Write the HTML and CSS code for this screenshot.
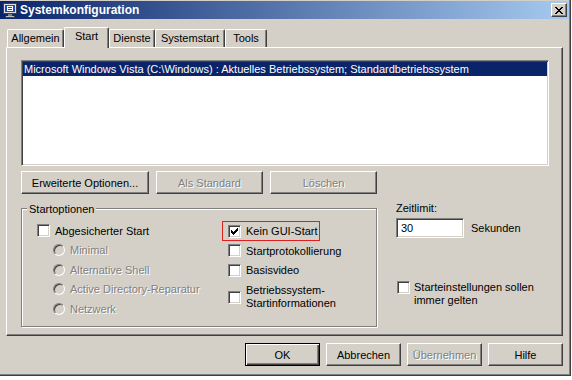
FILE: index.html
```html
<!DOCTYPE html>
<html lang="de">
<head>
<meta charset="utf-8">
<title>Systemkonfiguration</title>
<link rel="stylesheet" href="styles.css">
</head>
<body>
<div class="window">
  <div class="titlebar">
    <svg class="app-icon" viewBox="0 0 16 16" width="16" height="16" shape-rendering="crispEdges">
      <rect x="1" y="1" width="14" height="11" fill="#404040"/>
      <rect x="2" y="2" width="12" height="9" fill="#e0e0e0"/>
      <rect x="3" y="3" width="10" height="7" fill="#1c4fc4"/>
      <rect x="5" y="4" width="6" height="5" fill="#ffffff"/>
      <rect x="6" y="5" width="4" height="1" fill="#1c4fc4"/>
      <rect x="6" y="7" width="4" height="1" fill="#1c4fc4"/>
      <rect x="6" y="12" width="4" height="2" fill="#808080"/>
      <rect x="3" y="14" width="10" height="2" fill="#404040"/>
      <rect x="4" y="14" width="8" height="1" fill="#c0c0c0"/>
    </svg>
    <span class="title">Systemkonfiguration</span>
    <div class="close">
      <svg viewBox="0 0 8 7" width="8" height="7" shape-rendering="crispEdges"><path d="M0 0h2v1H0zM6 0h2v1H6zM1 1h2v1H1zM5 1h2v1H5zM2 2h4v1H2zM3 3h2v1H3zM2 4h4v1H2zM1 5h2v1H1zM5 5h2v1H5zM0 6h2v1H0zM6 6h2v1H6z" fill="#000"/></svg>
    </div>
  </div>
  <div class="body">
    <div class="tabs">
      <div class="tab w-allg">Allgemein</div>
      <div class="tab active w-start">Start</div>
      <div class="tab w-dienste">Dienste</div>
      <div class="tab w-sys">Systemstart</div>
      <div class="tab w-tools">Tools</div>
    </div>
    <div class="panel">
      <div class="listbox">
        <div class="item selected">Microsoft Windows Vista (C:\Windows) : Aktuelles Betriebssystem; Standardbetriebssystem</div>
      </div>
      <div class="btnrow">
        <div class="btn w-erw">Erweiterte Optionen...</div>
        <div class="btn disabled w-std">Als Standard</div>
        <div class="btn disabled w-std">Löschen</div>
      </div>
      <div class="lower">
        <div class="group">
          <div class="group-title">Startoptionen</div>
          <div class="group-cols">
            <div class="col-left">
              <div class="opt"><span class="cb"></span><span>Abgesicherter Start</span></div>
              <div class="opt sub disabled"><span class="rb"></span><span>Minimal</span></div>
              <div class="opt sub disabled"><span class="rb"></span><span>Alternative Shell</span></div>
              <div class="opt sub disabled"><span class="rb"></span><span>Active Directory-Reparatur</span></div>
              <div class="opt sub disabled"><span class="rb"></span><span>Netzwerk</span></div>
            </div>
            <div class="col-right">
              <div class="opt focus"><span class="cb"><svg viewBox="0 0 7 7" width="7" height="7" shape-rendering="crispEdges"><path d="M0 2h1v3H0zM1 3h1v3H1zM2 4h1v3H2zM3 3h1v3H3zM4 2h1v3H4zM5 1h1v3H5zM6 0h1v3H6z" fill="#000"/></svg></span><span>Kein GUI-Start</span></div>
              <div class="opt"><span class="cb"></span><span>Startprotokollierung</span></div>
              <div class="opt"><span class="cb"></span><span>Basisvideo</span></div>
              <div class="opt two"><span class="cb"></span><span class="ml">Betriebssystem-<br>Startinformationen</span></div>
            </div>
          </div>
        </div>
        <div class="side">
          <div class="lbl">Zeitlimit:</div>
          <div class="timerow">
            <div class="input">30</div>
            <span>Sekunden</span>
          </div>
          <div class="persist"><span class="cb"></span><span class="ml">Starteinstellungen sollen<br>immer gelten</span></div>
        </div>
      </div>
    </div>
    <div class="footer">
      <div class="btn default w-foot">OK</div>
      <div class="btn w-foot">Abbrechen</div>
      <div class="btn disabled w-foot">Übernehmen</div>
      <div class="btn w-foot">Hilfe</div>
    </div>
  </div>
</div>
</body>
</html>
```

FILE: styles.css
```css
body {
  margin: 0;
  background: #ffffff;
  font-family: "Liberation Sans", Arial, sans-serif;
  font-size: 11px;
  color: #000;
}

.window {
  width: 571px;
  height: 376px;
  box-sizing: border-box;
  background: #d4d0c8;
  padding-top: 1px;
  border-right: 1px solid #404040;
  border-bottom: 1px solid #404040;
  box-shadow: inset -1px -1px 0 #808080;
}

.titlebar {
  height: 18px;
  margin-right: 1px;
  background: linear-gradient(to right, #0a246a, #a6caf0);
  display: flex;
  align-items: center;
}

.app-icon {
  flex: none;
  margin-left: 2px;
  display: block;
}

.title {
  flex: 1;
  margin-left: 2px;
  color: #fff;
  font-weight: bold;
  font-size: 12px;
  line-height: 18px;
}

.close {
  flex: none;
  width: 16px;
  height: 14px;
  box-sizing: border-box;
  margin-right: 2px;
  background: #d4d0c8;
  border: 1px solid;
  border-color: #fff #404040 #404040 #fff;
  box-shadow: inset -1px -1px 0 #808080;
  display: flex;
  align-items: center;
  justify-content: center;
}
.close svg { display: block; }

.body {
  padding: 8px 0 0 6px;
}

.tabs {
  display: flex;
  align-items: flex-end;
  height: 20px;
  padding-left: 1px;
}

.tab {
  box-sizing: border-box;
  height: 18px;
  border: 1px solid #fff;
  border-bottom: none;
  border-right-color: #404040;
  border-radius: 2px 2px 0 0;
  box-shadow: inset -1px 0 0 #808080;
  text-align: center;
  line-height: 13px;
  padding-top: 2px;
  white-space: nowrap;
}
.tab.active {
  height: 21px;
  margin-bottom: -1px;
  position: relative;
  z-index: 1;
  background: #d4d0c8;
}
.w-allg { width: 57px; }
.w-start { width: 45px; }
.w-dienste { width: 46px; }
.w-sys { width: 70px; }
.w-tools { width: 42px; }

.panel {
  box-sizing: border-box;
  width: 557px;
  height: 289px;
  border: 1px solid;
  border-color: #fff #404040 #404040 #fff;
  box-shadow: inset -1px -1px 0 #808080;
  padding: 12px 0 0 14px;
}

.listbox {
  box-sizing: border-box;
  width: 528px;
  height: 106px;
  background: #fff;
  border: 1px solid;
  border-color: #808080 #fff #fff #808080;
  box-shadow: inset 1px 1px 0 #404040, inset -1px -1px 0 #d4d0c8;
  padding: 1px;
}
.item {
  height: 14px;
  line-height: 14px;
  padding-left: 1px;
  white-space: nowrap;
  overflow: hidden;
}
.item.selected {
  background: #0a246a;
  color: #fff;
}

.btnrow {
  display: flex;
  gap: 7px;
  margin-top: 5px;
}

.btn {
  box-sizing: border-box;
  height: 23px;
  border: 1px solid;
  border-color: #fff #404040 #404040 #fff;
  box-shadow: inset -1px -1px 0 #808080;
  display: flex;
  align-items: center;
  justify-content: center;
  white-space: nowrap;
}
.btn.disabled {
  color: #808080;
  text-shadow: 1px 1px 0 #fff;
}
.btn.default {
  border-color: #000;
  box-shadow: inset 1px 1px 0 #fff, inset -1px -1px 0 #404040, inset -2px -2px 0 #808080;
}
.w-erw { width: 128px; }
.w-std { width: 107px; }
.w-foot { width: 75px; }

.lower {
  display: flex;
  align-items: flex-start;
  margin-top: 8px;
}

.group {
  box-sizing: border-box;
  width: 356px;
  height: 119px;
  margin-top: 6px;
  border: 1px solid #808080;
  box-shadow: inset 1px 1px 0 #fff, 1px 1px 0 #fff;
  padding-left: 15px;
}
.group-title {
  width: fit-content;
  margin: -6px 0 0 -10px;
  padding: 0 2px;
  background: #d4d0c8;
  line-height: 13px;
}
.group-cols {
  display: flex;
  margin-top: 5px;
}
.col-left { width: 185px; }

.opt {
  display: flex;
  align-items: center;
  height: 19.5px;
  white-space: nowrap;
}
.opt .cb { margin-right: 5px; }
.opt.sub { padding-left: 16px; }
.opt.sub .rb { margin-right: 5px; }
.opt.disabled {
  color: #808080;
  text-shadow: 1px 1px 0 #fff;
}
.col-right .opt { padding-left: 6px; }
.col-right .opt.focus {
  box-sizing: border-box;
  width: 98px;
  height: 20px;
  border: 1px solid #e02020;
  padding-left: 5px;
}
.opt.two {
  height: auto;
  padding-top: 4px;
}
.ml { line-height: 13px; }

.cb {
  flex: none;
  box-sizing: border-box;
  width: 13px;
  height: 13px;
  background: #fff;
  border: 1px solid;
  border-color: #808080 #fff #fff #808080;
  box-shadow: inset 1px 1px 0 #404040, inset -1px -1px 0 #d4d0c8;
  display: flex;
  align-items: center;
  justify-content: center;
}
.cb svg { display: block; }

.rb {
  flex: none;
  box-sizing: border-box;
  width: 12px;
  height: 12px;
  border-radius: 50%;
  background: #d4d0c8;
  border: 1px solid;
  border-color: #808080 #fff #fff #808080;
  box-shadow: inset 1px 1px 0 #404040;
}

.side {
  margin-left: 19px;
}
.lbl { line-height: 13px; }
.timerow {
  display: flex;
  align-items: center;
  gap: 7px;
  margin-top: 3px;
}
.input {
  box-sizing: border-box;
  width: 68px;
  height: 20px;
  background: #fff;
  border: 1px solid;
  border-color: #808080 #fff #fff #808080;
  box-shadow: inset 1px 1px 0 #404040, inset -1px -1px 0 #d4d0c8;
  padding-left: 4px;
  line-height: 18px;
}
.persist {
  display: flex;
  align-items: flex-start;
  gap: 4px;
  margin-top: 43px;
  margin-left: 1px;
  white-space: nowrap;
}

.footer {
  display: flex;
  justify-content: flex-end;
  gap: 6px;
  width: 557px;
  margin-top: 7px;
}
```
